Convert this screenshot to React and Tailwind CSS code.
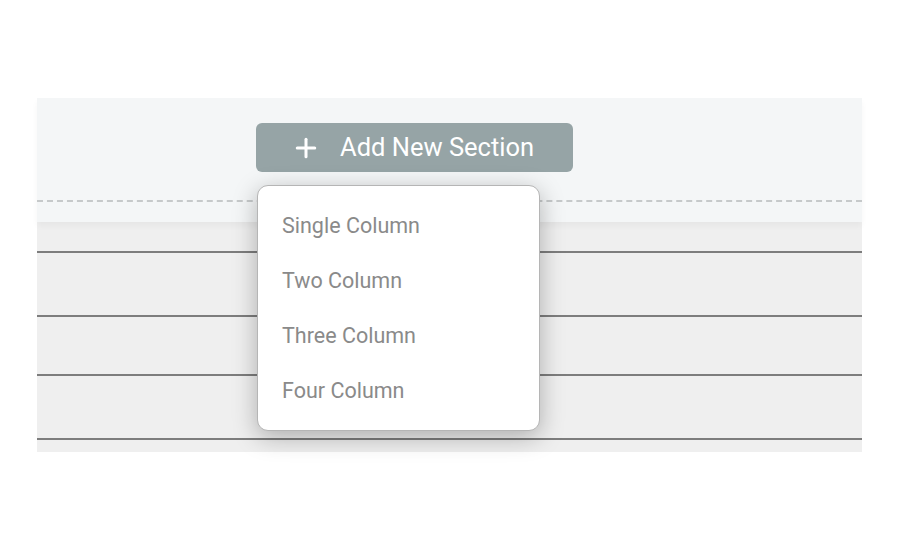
import { Plus } from 'lucide-react';

const OPTIONS = ['Single Column', 'Two Column', 'Three Column', 'Four Column'];

export default function App() {
  return (
    <div className="w-[900px] h-[550px] bg-white pt-[98px] pl-[37px]" style={{ fontFamily: 'Roboto, "Liberation Sans", sans-serif' }}>
      <div className="relative w-[825px] h-[354px] flex flex-col">
        {/* top builder strip */}
        <div className="relative h-[124px] bg-[#f4f6f7] shadow-[0_4px_6px_rgba(0,0,0,0.04)] z-10">
          <div className="pt-[25px] pl-[219px]">
            <button className="w-[317px] h-[49px] rounded-[6px] bg-[#96a4a6] text-white flex items-center pl-[35px] gap-[19px]">
              <Plus size={30} strokeWidth={2.4} />
              <span className="text-[25.5px] leading-none">Add New Section</span>
            </button>
          </div>
          <div className="mt-[28px] border-t-2 border-dashed border-[#c6c9ca]" />
        </div>

        {/* rows */}
        <div className="flex-1 bg-[#efefef] flex flex-col">
          <div className="h-[31px] border-b-2 border-[#7d7d7d]" />
          <div className="h-[64px] border-b-2 border-[#7d7d7d]" />
          <div className="h-[59px] border-b-2 border-[#7d7d7d]" />
          <div className="h-[64px] border-b-2 border-[#7d7d7d]" />
          <div className="flex-1" />
        </div>

        {/* dropdown */}
        <div className="absolute z-20 left-[220px] top-[87px] w-[283px] h-[246px] bg-white rounded-[11px] border border-[#b5b5b5] shadow-[0_6px_24px_rgba(0,0,0,0.28)] pt-[13px] pb-[13px]">
          {OPTIONS.map((label) => (
            <div key={label} className="h-[55px] flex items-center pl-[24px] text-[21.5px] text-[#8a8a8a]">
              {label}
            </div>
          ))}
        </div>
      </div>
    </div>
  );
}
